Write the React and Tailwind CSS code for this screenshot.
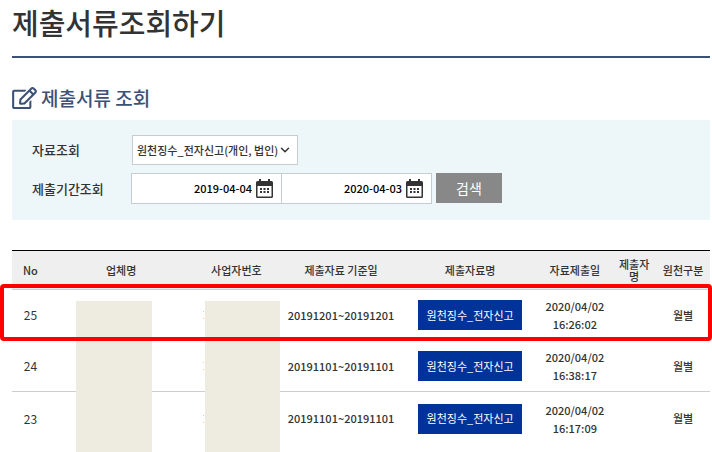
// src/pages/DocumentSearch.jsx
import React, { useState } from "react";
import { ChevronDown } from "lucide-react";
import { FaRegEdit } from "react-icons/fa";

const COLUMNS = [
  { label: "No", width: "w-[5%]" },
  { label: "업체명", width: "w-[21%]" },
  { label: "사업자번호", width: "w-[12%]" },
  { label: "제출자료 기준일", width: "w-[18%]" },
  { label: "제출자료명", width: "w-[19%]" },
  { label: "자료제출일", width: "w-[11%]" },
  { label: "제출자명", width: "w-[6%]" },
  { label: "원천구분", width: "w-[8%]" },
];

const ROWS = [
  { no: 25, period: "20191201~20191201", date: "2020/04/02", time: "16:26:02" },
  { no: 24, period: "20191101~20191101", date: "2020/04/02", time: "16:38:17" },
  { no: 23, period: "20191101~20191101", date: "2020/04/02", time: "16:17:09" },
];

const CalendarIcon = () => (
  <svg className="w-[17px] h-[19px]" viewBox="0 0 17 19" fill="#333">
    <path
      fillRule="evenodd"
      d="M3 0h2v2h7V0h2v2h1.5A1.5 1.5 0 0 1 17 3.500v14a1.500 1.500 0 0 1-1.500 1.500h-14A1.500 1.500 0 0 1 0 17.500v-14A1.500 1.500 0 0 1 1.500 2H3zM1.500 7v10.500h14V7z"
    />
    <path d="M4 9h2v2H4zM7.500 9h2v2h-2zM11 9h2v2h-2zM4 12h2v2H4zM7.500 12h2v2h-2zM11 12h2v2h-2z" />
  </svg>
);

const DateField = ({ label, value, onChange }) => (
  <div className="flex items-center w-[151px] h-[31px] pr-2 gap-1 bg-white border border-[#c5cdd3] -ml-px">
    <input
      type="text"
      aria-label={label}
      value={value}
      onChange={(e) => onChange(e.target.value)}
      className="w-full min-w-0 text-right text-[11px] font-medium text-black outline-none"
    />
    <button type="button" aria-label={`${label} 선택`} className="shrink-0">
      <CalendarIcon />
    </button>
  </div>
);

const App = () => {
  const [docType, setDocType] = useState("withholding");
  const [from, setFrom] = useState("2019-04-04");
  const [to, setTo] = useState("2020-04-03");

  return (
    <main className="pl-3 pr-0.5 overflow-hidden bg-white text-[#333] font-['Noto_Sans_CJK_KR',sans-serif]">
      <h1 className="h-[58px] pt-0.5 border-b-2 border-[#3b5175] text-[29px] leading-10 font-medium">
        제출서류조회하기
      </h1>

      <h2 className="flex items-center gap-1 mt-7 h-6 text-[19px] leading-6 font-medium text-[#3b5175]">
        <FaRegEdit className="w-[25px] h-[22px] shrink-0" />
        제출서류 조회
      </h2>

      <form
        className="flex flex-col gap-2 mt-2.5 px-5 pt-[15px] h-[100px] bg-[#edf7fa]"
        onSubmit={(e) => e.preventDefault()}
      >
        <div className="flex items-center">
          <label htmlFor="docType" className="w-[100px] text-[13px] font-medium">
            자료조회
          </label>
          <div className="relative">
            <select
              id="docType"
              value={docType}
              onChange={(e) => setDocType(e.target.value)}
              className="appearance-none w-[166px] h-[30px] pl-1 pr-4 bg-white border border-[#c5cdd3] text-[11px] font-medium"
            >
              <option value="withholding">원천징수_전자신고(개인, 법인)</option>
            </select>
            <ChevronDown className="absolute right-1.5 top-2 w-3.5 h-3.5 pointer-events-none" strokeWidth={2.5} />
          </div>
        </div>
        <div className="flex items-start">
          <span className="w-[100px] text-[13px] leading-8 font-medium">제출기간조회</span>
          <div className="flex">
            <DateField label="시작일" value={from} onChange={setFrom} />
            <DateField label="종료일" value={to} onChange={setTo} />
          </div>
          <button type="submit" className="w-[66px] h-[30px] ml-1 bg-[#888] text-[14px] text-white">
            검색
          </button>
        </div>
      </form>

      <div className="relative mt-[30px] pb-4">
        <table className="w-full table-fixed border-separate border-spacing-0 border-t border-black text-center text-[11px] font-medium">
          <thead>
            <tr className="h-[39px] bg-[#efefef]">
              {COLUMNS.map((col) => (
                <th
                  key={col.label}
                  className={`${col.width} pl-1 pr-0.5 py-0 border-b border-[#ccced6] leading-3 font-medium`}
                >
                  {col.label}
                </th>
              ))}
            </tr>
          </thead>
          <tbody className="[&_td]:border-b [&_td]:border-[#ccced6] [&_td]:pl-0.5 [&>tr:last-child>td]:border-b-0">
            {ROWS.map((row) => (
              <tr key={row.no} className="h-[51px] last:h-[53px]">
                <td className="text-[12px] font-normal">{row.no}</td>
                <td />
                <td>
                  <span className="block w-px h-2 ml-2 border-y border-[#f8c98c]" />
                </td>
                <td>{row.period}</td>
                <td>
                  <button type="button" className="w-[104px] h-[30px] bg-[#003399] text-[11px] font-normal text-white">
                    원천징수_전자신고
                  </button>
                </td>
                <td className="leading-[18px]">
                  {row.date}
                  <br />
                  {row.time}
                </td>
                <td />
                <td>월별</td>
              </tr>
            ))}
          </tbody>
        </table>

        {/* masked company name and business number */}
        <div className="absolute left-16 top-[51px] bottom-0 w-[76px] bg-[#eeece0]" />
        <div className="absolute left-[193px] top-[51px] bottom-0 w-[75px] bg-[#eeece0]" />

        {/* highlight around the latest submission */}
        <div className="absolute -left-3 right-[-2px] top-[34px] h-[57px] border-4 border-[#ff0000] rounded-sm pointer-events-none" />
      </div>
    </main>
  );
};

export default App;
